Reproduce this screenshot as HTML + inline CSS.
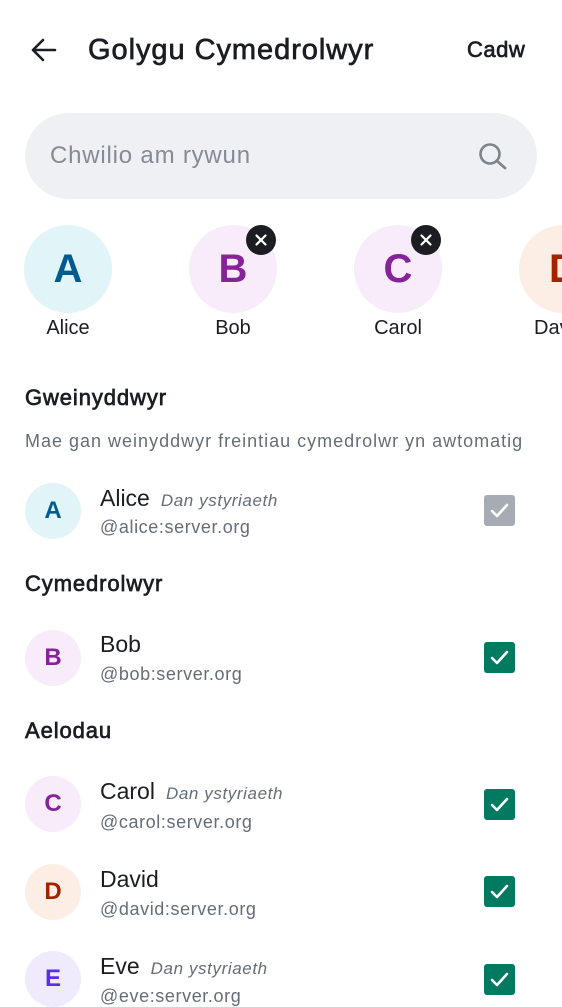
<!DOCTYPE html>
<html><head><meta charset="utf-8"><style>
*{margin:0;padding:0;box-sizing:border-box}
body{width:562px;height:1000px;overflow:hidden;background:#fff;font-family:"Liberation Sans",Roboto,sans-serif;color:#1b1d22;position:relative}
.a{position:absolute;white-space:nowrap}
.med{font-weight:normal;-webkit-text-stroke:0.7px #1b1d22}
.title{left:88px;top:32px;font-size:29px;line-height:36px;letter-spacing:0.95px}
.cadw{left:467px;top:36px;font-size:22px;line-height:28px;letter-spacing:0.5px}
.search{left:25px;top:113px;width:512px;height:86px;border-radius:43px;background:#eef0f4}
.ph{left:50px;top:142px;font-size:24px;line-height:28px;color:#858b94;letter-spacing:0.8px}
.big{position:absolute;width:88px;height:88px;border-radius:50%;display:flex;align-items:center;justify-content:center;font-size:40px;font-weight:bold;top:225px}
.bn{font-size:20px;line-height:24px;top:316px;text-align:center;width:100px}
.badge{position:absolute;width:30px;height:30px;border-radius:50%;background:#1b1d22;top:225px}
.h{left:25px;font-size:22px;line-height:28px;letter-spacing:0.9px}
.desc{left:25px;top:431px;font-size:18px;line-height:20px;color:#656d77;letter-spacing:1px}
.av{position:absolute;left:25px;width:56px;height:56px;border-radius:50%;display:flex;align-items:center;justify-content:center;font-size:24px;font-weight:bold}
.nm{left:100px;font-size:23px;line-height:28px}
.nm i{font-size:17px;color:#656d77;margin-left:11px;letter-spacing:0.6px}
.hd{left:100px;font-size:18px;line-height:20px;color:#656d77;letter-spacing:0.6px}
.cb{position:absolute;left:484px;width:31px;height:31px;border-radius:3px;background:#007a61}
</style></head><body>
<svg class="a" style="left:28px;top:36px" width="30" height="28" viewBox="28 36 30 28"><path d="M55 50H33M43 40L33 50L43 60" fill="none" stroke="#1b1d22" stroke-width="2.6" stroke-linecap="round" stroke-linejoin="round"/></svg>
<div class="a title med">Golygu Cymedrolwyr</div>
<div class="a cadw med">Cadw</div>
<div class="a search"></div>
<div class="a ph">Chwilio am rywun</div>
<svg class="a" style="left:475px;top:140px" width="36" height="34" viewBox="475 140 36 34"><circle cx="490" cy="154" r="9.5" fill="none" stroke="#7d848d" stroke-width="2.6"/><path d="M497 161L505 168" stroke="#7d848d" stroke-width="2.8" stroke-linecap="round"/></svg>

<div class="big" style="left:24px;background:#e1f4f8;color:#005c8f">A</div>
<div class="a bn" style="left:18px">Alice</div>
<div class="big" style="left:189px;background:#f8ebfa;color:#86229a">B</div>
<div class="a bn" style="left:183px">Bob</div>
<div class="badge" style="left:246px"><svg width="30" height="30"><path d="M10.5 10.5L19.5 19.5M19.5 10.5L10.5 19.5" stroke="#fff" stroke-width="2.2" stroke-linecap="round"/></svg></div>
<div class="big" style="left:354px;background:#f8ebfa;color:#86229a">C</div>
<div class="a bn" style="left:348px">Carol</div>
<div class="badge" style="left:411px"><svg width="30" height="30"><path d="M10.5 10.5L19.5 19.5M19.5 10.5L10.5 19.5" stroke="#fff" stroke-width="2.2" stroke-linecap="round"/></svg></div>
<div class="big" style="left:519px;background:#fdeee5;color:#a12300;justify-content:flex-start;padding-left:30px">D</div>
<div class="a bn" style="left:534px;text-align:left">David</div>

<div class="a h med" style="top:384px">Gweinyddwyr</div>
<div class="a desc">Mae gan weinyddwyr freintiau cymedrolwr yn awtomatig</div>

<div class="av" style="top:483px;background:#e1f4f8;color:#005c8f">A</div>
<div class="a nm" style="top:484px">Alice<i>Dan ystyriaeth</i></div>
<div class="a hd" style="top:517px">@alice:server.org</div>
<div class="cb" style="top:495px;background:#a7abb3"><svg width="31" height="31"><path d="M8 16L13 21L23 10" fill="none" stroke="#fff" stroke-width="2.6" stroke-linecap="round" stroke-linejoin="round"/></svg></div>

<div class="a h med" style="top:570px">Cymedrolwyr</div>
<div class="av" style="top:630px;background:#f8ebfa;color:#86229a">B</div>
<div class="a nm" style="top:630px">Bob</div>
<div class="a hd" style="top:664px">@bob:server.org</div>
<div class="cb" style="top:642px"><svg width="31" height="31"><path d="M8 16L13 21L23 10" fill="none" stroke="#fff" stroke-width="2.6" stroke-linecap="round" stroke-linejoin="round"/></svg></div>

<div class="a h med" style="top:717px">Aelodau</div>
<div class="av" style="top:776px;background:#f8ebfa;color:#86229a">C</div>
<div class="a nm" style="top:777px">Carol<i>Dan ystyriaeth</i></div>
<div class="a hd" style="top:812px">@carol:server.org</div>
<div class="cb" style="top:789px"><svg width="31" height="31"><path d="M8 16L13 21L23 10" fill="none" stroke="#fff" stroke-width="2.6" stroke-linecap="round" stroke-linejoin="round"/></svg></div>

<div class="av" style="top:864px;background:#fdeee5;color:#a12300">D</div>
<div class="a nm" style="top:865px">David</div>
<div class="a hd" style="top:899px">@david:server.org</div>
<div class="cb" style="top:876px"><svg width="31" height="31"><path d="M8 16L13 21L23 10" fill="none" stroke="#fff" stroke-width="2.6" stroke-linecap="round" stroke-linejoin="round"/></svg></div>

<div class="av" style="top:951px;background:#efebfd;color:#5b2ee0">E</div>
<div class="a nm" style="top:952px">Eve<i>Dan ystyriaeth</i></div>
<div class="a hd" style="top:986px">@eve:server.org</div>
<div class="cb" style="top:964px"><svg width="31" height="31"><path d="M8 16L13 21L23 10" fill="none" stroke="#fff" stroke-width="2.6" stroke-linecap="round" stroke-linejoin="round"/></svg></div>
</body></html>
